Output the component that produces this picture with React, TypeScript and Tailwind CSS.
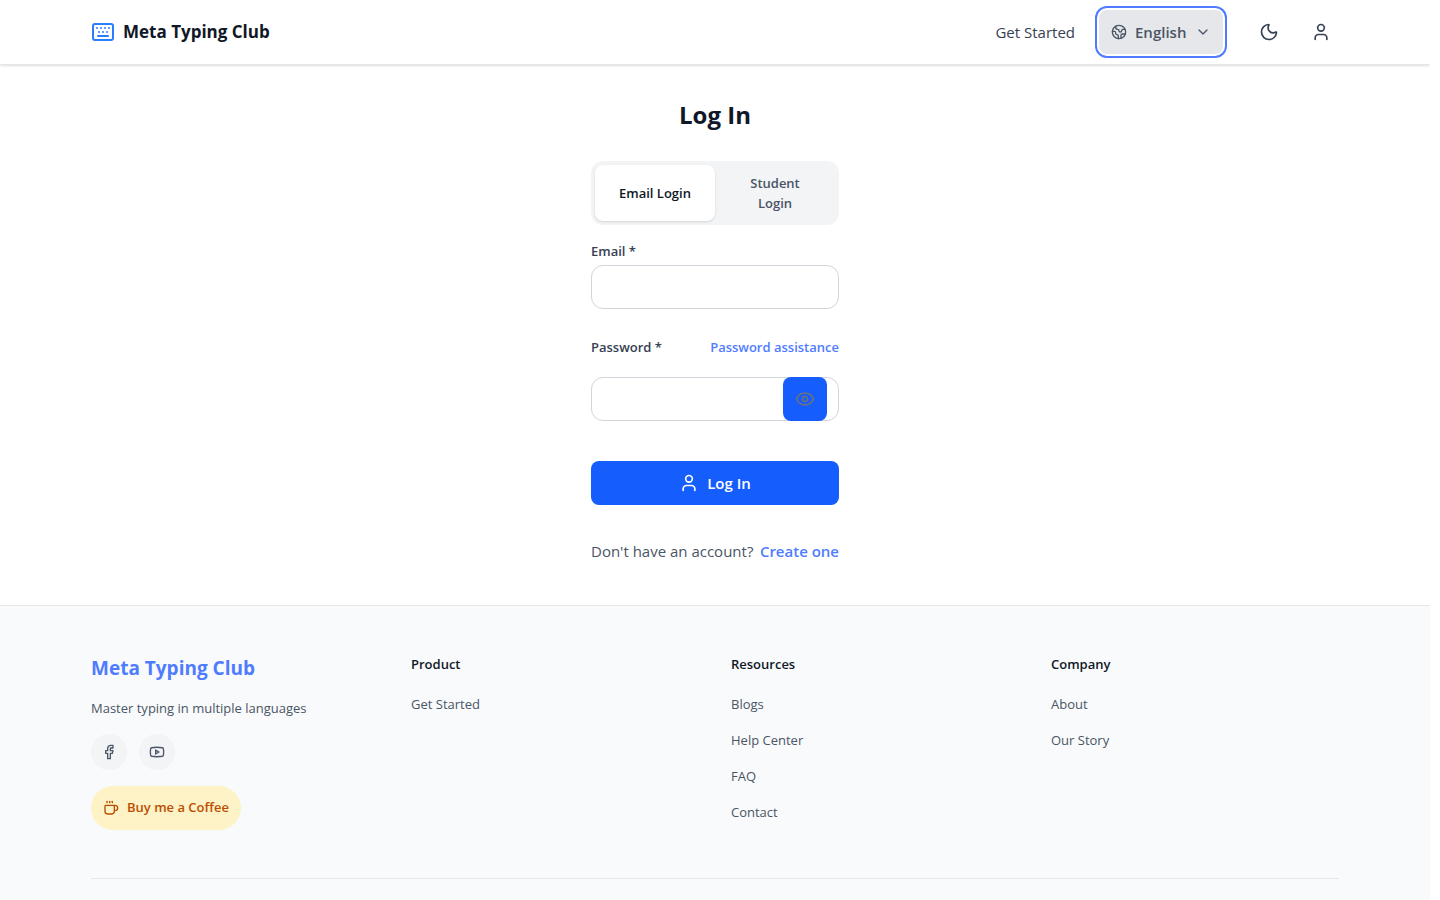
import { useState } from 'react';
import { ChevronDown, Coffee, Earth, Eye, Facebook, Keyboard, Moon, User, Youtube } from 'lucide-react';

const footerColumns = [
  { title: 'Product', links: ['Get Started'] },
  { title: 'Resources', links: ['Blogs', 'Help Center', 'FAQ', 'Contact'] },
  { title: 'Company', links: ['About', 'Our Story'] },
];

function Header() {
  const [language, setLanguage] = useState('English');

  return (
    <header className="border-b border-gray-200 bg-white shadow-sm">
      <div className="mx-auto flex h-16 max-w-7xl items-center justify-between px-4">
        <a href="#" className="flex items-center gap-2">
          <Keyboard className="size-6 text-[#2b7fff]" />
          <span className="text-[17px] font-bold text-gray-900">Meta Typing Club</span>
        </a>

        <nav className="flex items-center gap-6">
          <a href="#" className="text-[15px] text-gray-700">Get Started</a>
          <div className="flex h-11 items-center gap-2 rounded-lg bg-gray-200 px-3 text-gray-600 ring-2 ring-[#4f7cff] ring-offset-2">
            <Earth className="size-4" />
            <select
              aria-label="Language"
              value={language}
              onChange={(e) => setLanguage(e.target.value)}
              className="w-[52px] appearance-none bg-transparent text-[15px] font-semibold outline-none"
            >
              <option>English</option>
            </select>
            <ChevronDown className="size-4" />
          </div>
          <div className="flex items-center gap-3 text-gray-700">
            <button type="button" aria-label="Toggle dark mode" className="flex size-11 items-center justify-center">
              <Moon className="size-5" />
            </button>
            <button type="button" aria-label="Account" className="flex size-9 items-center justify-center">
              <User className="size-5" />
            </button>
          </div>
        </nav>
      </div>
    </header>
  );
}

function LoginForm() {
  const [tab, setTab] = useState('email');
  const [showPassword, setShowPassword] = useState(false);

  const tabClass = (active: boolean) =>
    active ? 'rounded-lg bg-white px-4 py-2 text-gray-900 shadow-sm' : 'rounded-lg px-6 py-2 text-gray-600';

  return (
    <main className="mx-auto w-[248px] pt-8 pb-10">
      <h1 className="mb-7 text-center text-2xl leading-9 font-bold text-gray-900">Log In</h1>

      <div className="mb-4 grid h-16 grid-cols-2 rounded-xl bg-gray-100 p-1 text-[13px] leading-5 font-semibold">
        <button type="button" className={tabClass(tab === 'email')} onClick={() => setTab('email')}>
          Email Login
        </button>
        <button type="button" className={tabClass(tab === 'student')} onClick={() => setTab('student')}>
          Student Login
        </button>
      </div>

      <form onSubmit={(e) => e.preventDefault()}>
        <label htmlFor="email" className="mb-1 block text-[13px] leading-5 font-semibold text-gray-700">
          Email *
        </label>
        <input
          id="email"
          type="email"
          className="mb-7 block h-11 w-full rounded-xl border border-gray-300 bg-white px-3 text-[15px]"
        />

        <div className="mb-5 flex justify-between text-[13px] leading-5 font-semibold">
          <label htmlFor="password" className="text-gray-700">Password *</label>
          <a href="#" className="text-[#4f7cff]">Password assistance</a>
        </div>
        <div className="relative mb-10">
          <input
            id="password"
            type={showPassword ? 'text' : 'password'}
            className="block h-11 w-full rounded-xl border border-gray-300 bg-white pr-16 pl-3 text-[15px]"
          />
          <button
            type="button"
            aria-label="Show password"
            onClick={() => setShowPassword(!showPassword)}
            className="absolute top-0 right-3 flex size-11 items-center justify-center rounded-lg bg-blue-600 text-gray-500"
          >
            <Eye className="size-5" />
          </button>
        </div>

        <button
          type="submit"
          className="flex h-11 w-full items-center justify-center gap-2 rounded-lg bg-blue-600 text-[15px] font-semibold text-white"
        >
          <User className="size-5" />
          Log In
        </button>
      </form>

      <p className="mt-8 flex justify-between text-[15px] leading-7 whitespace-nowrap text-gray-600">
        Don't have an account?
        <a href="#" className="font-semibold text-[#4f7cff]">Create one</a>
      </p>
    </main>
  );
}

function Footer() {
  return (
    <footer className="grow border-t border-gray-200 bg-gray-50">
      <div className="mx-auto max-w-7xl px-4 pt-12">
        <div className="grid grid-cols-4 gap-8 border-b border-gray-200 pb-12">
          <div>
            <h2 className="text-[19px] leading-7 font-bold text-[#4f7cff]">Meta Typing Club</h2>
            <p className="mt-4 text-[13px] leading-5 text-gray-600">Master typing in multiple languages</p>
            <div className="mt-4 flex gap-3 text-gray-600">
              <a href="#" aria-label="Facebook" className="flex size-9 items-center justify-center rounded-full bg-gray-100">
                <Facebook className="size-4" />
              </a>
              <a href="#" aria-label="YouTube" className="flex size-9 items-center justify-center rounded-full bg-gray-100">
                <Youtube className="size-4" />
              </a>
            </div>
            <a
              href="#"
              className="mt-4 inline-flex h-11 items-center gap-2 rounded-full bg-amber-100 px-3 text-[13px] font-semibold text-amber-700"
            >
              <Coffee className="size-4" />
              Buy me a Coffee
            </a>
          </div>

          {footerColumns.map((column) => (
            <div key={column.title}>
              <h3 className="text-[13px] leading-5 font-semibold text-gray-900">{column.title}</h3>
              <ul className="mt-5 space-y-4 text-[13px] leading-5 text-gray-600">
                {column.links.map((link) => (
                  <li key={link}>
                    <a href="#">{link}</a>
                  </li>
                ))}
              </ul>
            </div>
          ))}
        </div>
      </div>
    </footer>
  );
}

export default function App() {
  return (
    <div className="bg-white pr-2.5 font-['Open_Sans','Noto_Sans',sans-serif]">
      <div className="flex min-h-screen flex-col overflow-x-clip">
        <Header />
        <LoginForm />
        <Footer />
      </div>
    </div>
  );
}
